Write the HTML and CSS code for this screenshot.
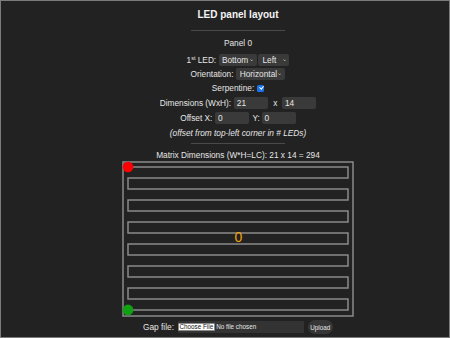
FILE: index.html
```html
<!DOCTYPE html>
<html lang="en">
<head>
<meta charset="utf-8">
<title>LED panel layout</title>
<link rel="stylesheet" href="styles.css">
</head>
<body>
<div class="frame">
  <main class="page">
    <h2 class="title">LED panel layout</h2>
    <hr class="rule">
    <div class="panel-name">Panel 0</div>

    <div class="row r14">
      <span>1<sup>st</sup> LED:</span>
      <span class="sel sel-bottom"><select><option>Bottom</option><option>Top</option></select><svg class="chev" viewBox="0 0 4 3"><path d="M0.5 0.6L2 2.1L3.5 0.6"/></svg></span>
      <span class="sel sel-left"><select><option>Left</option><option>Right</option></select><svg class="chev" viewBox="0 0 4 3"><path d="M0.5 0.6L2 2.1L3.5 0.6"/></svg></span>
    </div>

    <div class="row r14">
      <span>Orientation:</span>
      <span class="sel sel-orient"><select><option>Horizontal</option><option>Vertical</option></select><svg class="chev" viewBox="0 0 4 3"><path d="M0.5 0.6L2 2.1L3.5 0.6"/></svg></span>
    </div>

    <div class="row r14">
      <span>Serpentine:</span>
      <input class="check" type="checkbox" checked>
    </div>

    <div class="row r15">
      <span>Dimensions (WxH):</span>
      <input class="num" type="text" value="21">
      <span class="times">x</span>
      <input class="num" type="text" value="14">
    </div>

    <div class="row r15">
      <span>Offset X:</span>
      <input class="num" type="text" value="0">
      <span class="ylab">Y:</span>
      <input class="num" type="text" value="0">
    </div>

    <div class="row r15 note">(offset from top-left corner in # LEDs)</div>

    <hr class="rule rule2">

    <div class="matrix-label">Matrix Dimensions (W*H=LC): 21 x 14 = 294</div>

    <svg class="canvas" width="232" height="156" viewBox="0 0 232 156">
      <rect class="frame-rect" x="1" y="1" width="230" height="154"/>
      <path class="snake" d="M6 6H226V17H6V28H226V39H6V50H226V61H6V72H226V83H6V94H226V105H6V116H226V127H6V138H226V149H6"/>
      <text class="pnum" x="116.5" y="81">0</text>
      <circle class="start" cx="6" cy="6" r="5.3"/>
      <circle class="end" cx="6" cy="149" r="5.4"/>
    </svg>

    <div class="gap-row">
      <span>Gap file:</span>
      <span class="filebox"><span class="choose">Choose File</span><span class="nofile">No file chosen</span></span>
      <button class="upload" type="button">Upload</button>
    </div>
  </main>
</div>
</body>
</html>
```

FILE: styles.css
```css
html, body {
  margin: 0;
  padding: 0;
  background: #222;
}

.frame {
  width: 450px;
  height: 338px;
  box-sizing: border-box;
  border: 1px solid #7c7c7c;
  background: #222;
  overflow: hidden;
}

.page {
  padding: 8px 0 0 26px;
  text-align: center;
  color: #e6e6e6;
  font-family: "Liberation Sans", Arial, sans-serif;
  font-size: 8.3px;
}

.title {
  margin: 0;
  font-size: 10px;
  line-height: 12px;
  font-weight: bold;
  color: #f4f4f4;
}

.rule {
  width: 94px;
  height: 0;
  margin: 9px auto 0;
  border: 0;
  border-top: 1px solid #4a4a4a;
}

.panel-name {
  margin-top: 7px;
  line-height: 10px;
  height: 10px;
}

.row {
  display: flex;
  justify-content: center;
  align-items: center;
  gap: 3px;
  white-space: nowrap;
}

.panel-name + .row {
  margin-top: 5px;
}

.r14 { height: 14px; }
.r15 { height: 15px; }

sup {
  font-size: 5.5px;
  vertical-align: 0;
  position: relative;
  top: -3px;
}

.sel {
  display: inline-flex;
  align-items: center;
  box-sizing: border-box;
  height: 12px;
  background: #3a3a3a;
  border-radius: 2px;
}

.sel select {
  appearance: none;
  -webkit-appearance: none;
  border: 0;
  outline: none;
  background: transparent;
  color: #e6e6e6;
  font: inherit;
  margin: 0;
  padding: 0;
  height: 12px;
  flex: 1;
  min-width: 0;
}

.chev {
  width: 3.4px;
  height: 2.6px;
  flex: none;
}

.chev path {
  fill: none;
  stroke: #d4d4d4;
  stroke-width: 0.9;
}

.sel-bottom {
  width: 37.7px;
  padding: 0 3.4px 0 2.7px;
}

.sel-left {
  width: 31.6px;
  padding: 0 3.3px 0 4.6px;
  margin-left: -2px;
}

.sel-orient {
  width: 49px;
  padding: 0 4px 0 3.3px;
}

.check {
  appearance: none;
  -webkit-appearance: none;
  width: 7px;
  height: 7px;
  margin: 0;
  border-radius: 1.5px;
  background: #1a73e8;
  position: relative;
}

.check::after {
  content: "";
  position: absolute;
  left: 2.3px;
  top: 0.7px;
  width: 1.6px;
  height: 3.4px;
  border-right: 1.1px solid #fff;
  border-bottom: 1.1px solid #fff;
  transform: rotate(40deg);
}

.num {
  width: 34px;
  height: 12px;
  box-sizing: border-box;
  border: 0;
  outline: none;
  border-radius: 2px;
  background: #3a3a3a;
  color: #e6e6e6;
  font: inherit;
  padding: 0 2.7px;
  margin: 0;
}

.times {
  margin: 0 2px;
}

.ylab {
  margin: 0 -1px 0 0;
}

.note {
  font-style: italic;
}

.rule2 {
  margin-top: 2.5px;
}

.matrix-label {
  margin-top: 6.5px;
  line-height: 10px;
  height: 10px;
}

.canvas {
  display: block;
  margin: 1px auto 0;
}

.frame-rect,
.snake {
  fill: none;
  stroke: #8a8a8a;
  stroke-width: 1.5;
}

.pnum {
  fill: #f0a30a;
  font-family: "Liberation Sans", Arial, sans-serif;
  font-size: 14px;
  text-anchor: middle;
}

.start { fill: #ff0000; }
.end { fill: #11a011; }

.gap-row {
  display: flex;
  justify-content: center;
  align-items: center;
  height: 14px;
  margin-top: 3px;
  gap: 4px;
  white-space: nowrap;
}

.filebox {
  display: inline-flex;
  align-items: center;
  width: 125.6px;
  height: 12.3px;
  box-sizing: border-box;
  background: #333;
  font-size: 6.3px;
}

.choose {
  flex: none;
  display: inline-flex;
  align-items: center;
  height: 8px;
  box-sizing: border-box;
  padding: 0 0.6px;
  background: #fff;
  color: #111;
  border: 0.6px solid #8a8a8a;
  border-radius: 1px;
}

.nofile {
  flex: none;
  margin-left: 1.5px;
  color: #e6e6e6;
}

.upload {
  width: 25.4px;
  height: 14px;
  padding: 0;
  margin: 0;
  border: 0;
  border-radius: 7px;
  background: #363636;
  color: #e6e6e6;
  font-family: "Liberation Sans", Arial, sans-serif;
  font-size: 6.3px;
}
```
